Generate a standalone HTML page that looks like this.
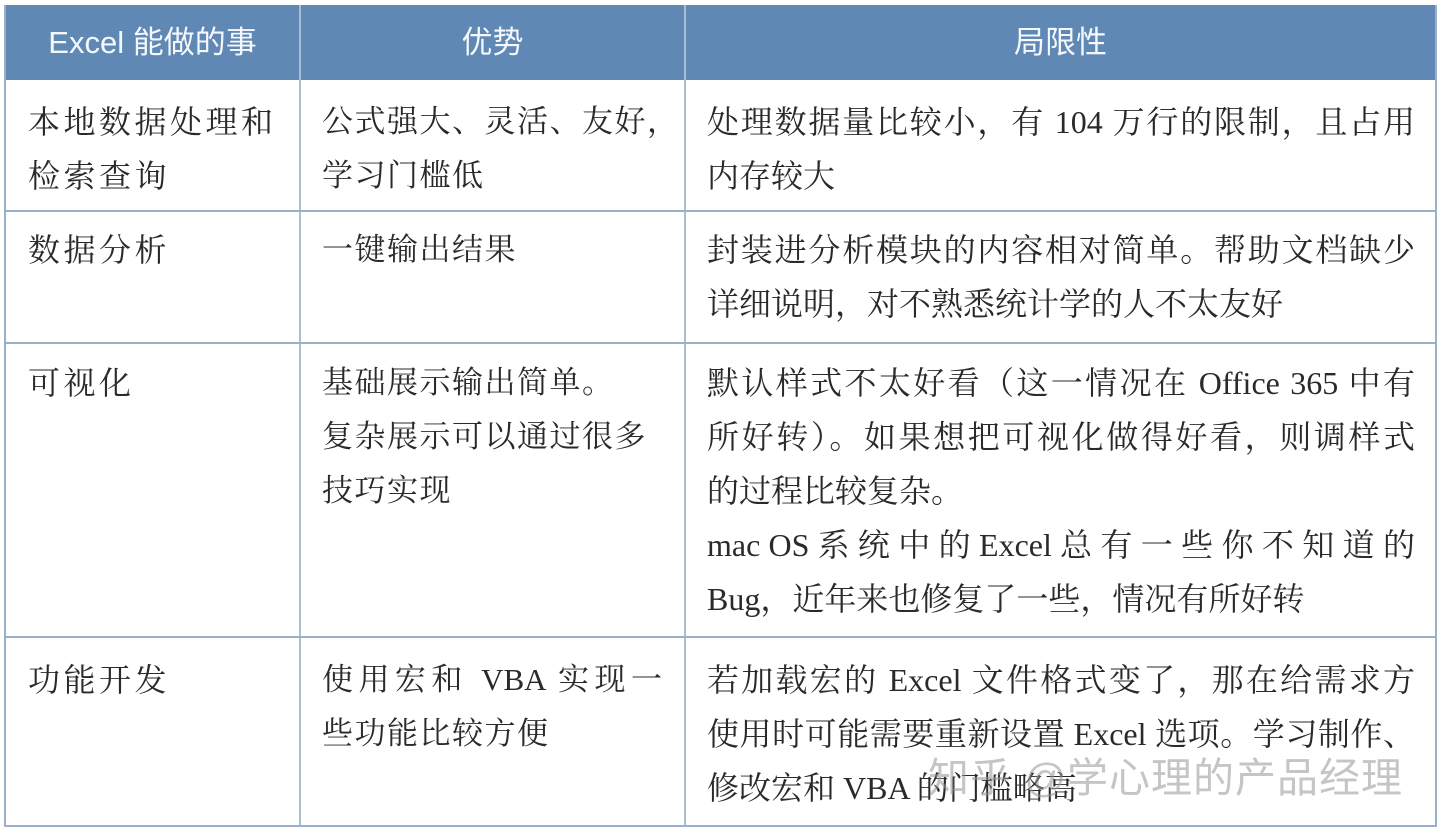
<!DOCTYPE html>
<html><head><meta charset="utf-8"><style>
body{margin:0;width:1440px;height:829px;background:#fff;position:relative;overflow:hidden;font-family:"Liberation Serif","Noto Serif CJK SC",serif;color:#2a2a2a}
.hd{position:absolute;left:5px;top:5px;width:1431px;height:75px;background:#6088b4}
.h{position:absolute;top:5px;height:75px;line-height:75px;color:#f4f7fb;font-family:"Liberation Sans","Noto Sans CJK SC",sans-serif;font-size:31px;text-align:center}
.vl{position:absolute;width:2px;background:#9bb0c8}
.hl{position:absolute;left:5px;width:1431px;height:2px;background:#9bb0c8}
.t{position:absolute;font-size:32px;line-height:54px;white-space:nowrap}
.j{text-align:justify;text-align-last:justify}
.wm{position:absolute;left:928px;top:744px;font-family:"Liberation Sans","Noto Sans CJK SC",sans-serif;font-size:41px;color:rgba(150,150,150,0.55);letter-spacing:1px}
</style></head><body>
<div class="hd"></div>
<div class="h" style="left:5px;width:295px">Excel 能做的事</div>
<div class="h" style="left:300px;width:385px">优势</div>
<div class="h" style="left:685px;width:751px">局限性</div>
<div class="vl" style="left:4px;top:5px;height:822px"></div>
<div class="vl" style="left:1435px;top:5px;height:822px"></div>
<div class="vl" style="left:299px;top:5px;height:822px;background:#a9bdd3"></div>
<div class="vl" style="left:684px;top:5px;height:822px;background:#a9bdd3"></div>
<div class="hl" style="top:210px"></div>
<div class="hl" style="top:342px"></div>
<div class="hl" style="top:636px"></div>
<div class="hl" style="top:825px"></div>

<div class="t" style="left:28px;top:95px;letter-spacing:3.5px">本地数据处理和<br>检索查询</div>
<div class="t" style="left:322px;top:95px;font-size:31px;letter-spacing:1.5px">公式强大、灵活、友好，<br>学习门槛低</div>
<div class="t" style="left:707px;top:95px;width:708px"><div class="j">处理数据量比较小，有 104 万行的限制，且占用</div><div>内存较大</div></div>

<div class="t" style="left:28px;top:223px;letter-spacing:3.5px">数据分析</div>
<div class="t" style="left:322px;top:223px;font-size:31px;letter-spacing:1.5px">一键输出结果</div>
<div class="t" style="left:707px;top:223px;width:708px"><div class="j">封装进分析模块的内容相对简单。帮助文档缺少</div><div>详细说明，对不熟悉统计学的人不太友好</div></div>

<div class="t" style="left:28px;top:356px;letter-spacing:3.5px">可视化</div>
<div class="t" style="left:322px;top:356px;font-size:31px;letter-spacing:1.5px">基础展示输出简单。<br>复杂展示可以通过很多<br>技巧实现</div>
<div class="t" style="left:707px;top:356px;width:708px"><div class="j">默认样式不太好看（这一情况在 Office 365 中有</div><div class="j">所好转）。如果想把可视化做得好看，则调样式</div><div>的过程比较复杂。</div><div class="j">mac OS 系 统 中 的 Excel 总 有 一 些 你 不 知 道 的</div><div>Bug，近年来也修复了一些，情况有所好转</div></div>

<div class="t" style="left:28px;top:653px;letter-spacing:3.5px">功能开发</div>
<div class="t" style="left:322px;top:653px;width:340px;font-size:31px"><div class="j">使用宏和 VBA 实现一</div><div style="letter-spacing:1.5px">些功能比较方便</div></div>
<div class="t" style="left:707px;top:653px;width:708px"><div class="j">若加载宏的 Excel 文件格式变了，那在给需求方</div><div class="j">使用时可能需要重新设置 Excel 选项。学习制作、</div><div>修改宏和 VBA 的门槛略高</div></div>

<div class="wm">知乎 @学心理的产品经理</div>
</body></html>
